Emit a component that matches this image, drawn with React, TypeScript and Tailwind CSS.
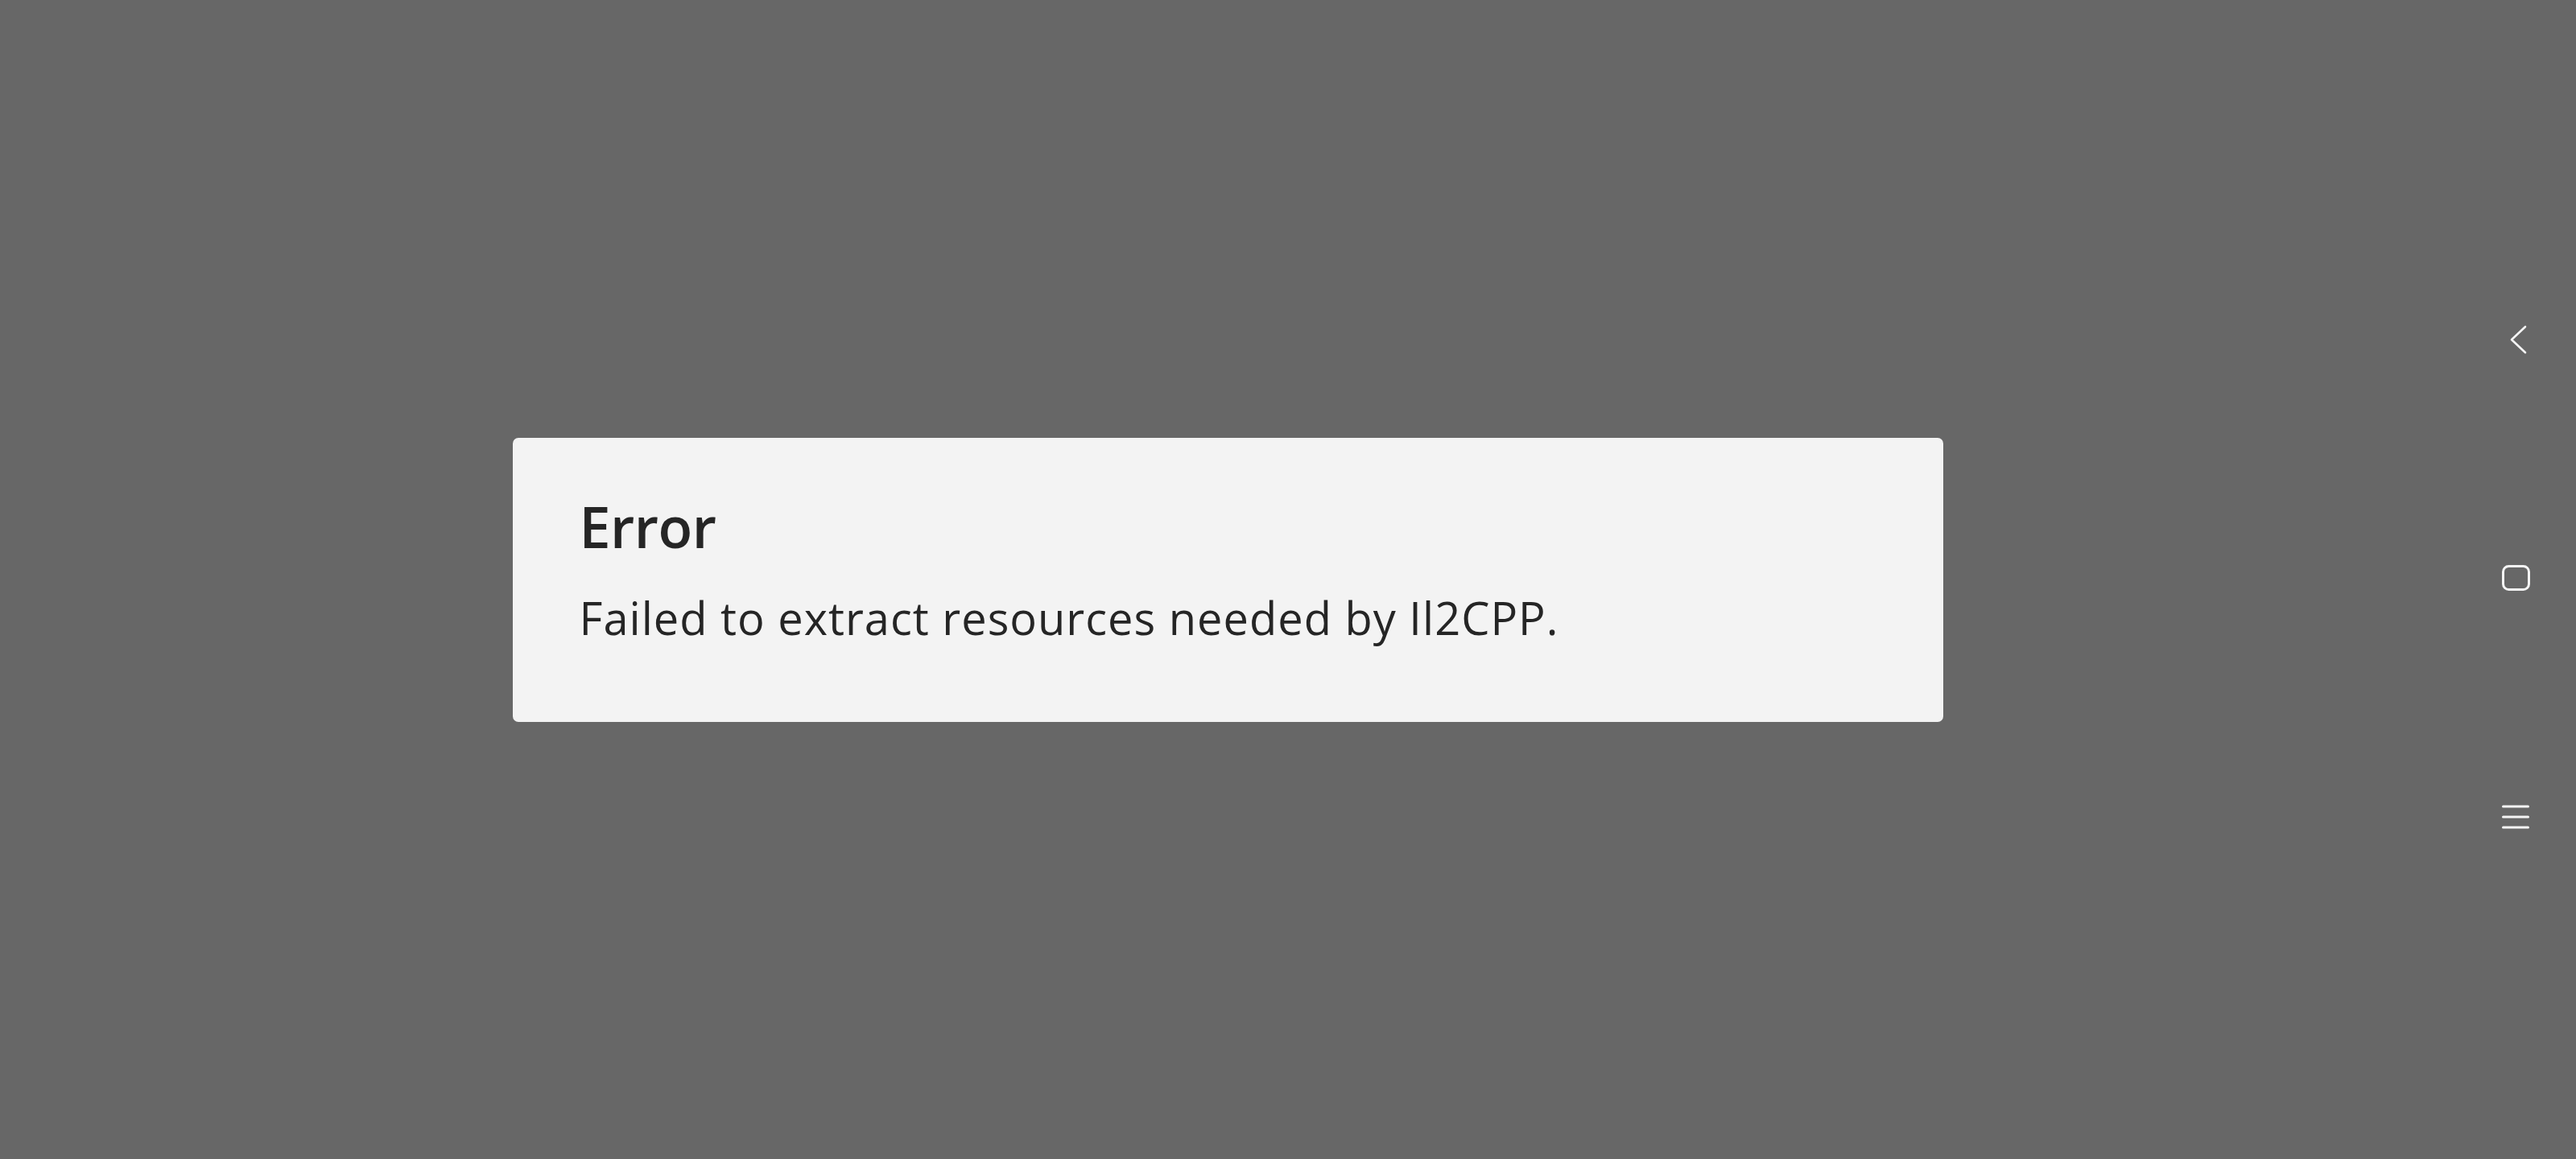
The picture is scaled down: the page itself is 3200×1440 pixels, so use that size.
import React from "react";

function BackIcon() {
  return (
    <svg width="40" height="40" viewBox="0 0 40 40" fill="none">
      <polyline points="32,5 15,21 32,37" stroke="#f5f5f5" strokeWidth="2.6" strokeLinecap="round" strokeLinejoin="round" />
    </svg>
  );
}

function HomeIcon() {
  return (
    <svg width="40" height="40" viewBox="0 0 40 40" fill="none">
      <rect x="4.5" y="5.5" width="32" height="29" rx="7" stroke="#f5f5f5" strokeWidth="3" />
    </svg>
  );
}

function MenuIcon() {
  return (
    <svg width="40" height="40" viewBox="0 0 40 40" fill="none">
      <line x1="4.5" y1="7" x2="35.5" y2="7" stroke="#f5f5f5" strokeWidth="3" strokeLinecap="round" />
      <line x1="4.5" y1="20" x2="35.5" y2="20" stroke="#f5f5f5" strokeWidth="3" strokeLinecap="round" />
      <line x1="4.5" y1="33" x2="35.5" y2="33" stroke="#f5f5f5" strokeWidth="3" strokeLinecap="round" />
    </svg>
  );
}

export default function App() {
  return (
    <div className="flex h-[1440px] w-[3200px] overflow-hidden bg-[#676767]" style={{ fontFamily: "'Open Sans', 'Noto Sans', sans-serif" }}>
      <main className="flex flex-1 items-center justify-center">
        <div className="w-[1777px] rounded-[7px] bg-[#f3f3f3] pl-[83px] pr-[83px] pt-[75px] pb-[102px]">
          <h1 className="text-[70px] font-semibold leading-none tracking-[-0.5px] text-[#252525]">Error</h1>
          <p className="mt-[50px] text-[56px] leading-none tracking-[1px] text-[#252525]">Failed to extract resources needed by Il2CPP.</p>
        </div>
      </main>
      <nav className="flex w-[150px] flex-col items-center pt-[401px] gap-[257px]">
        <div className="h-[40px] w-[40px]"><BackIcon /></div>
        <div className="h-[40px] w-[40px]"><HomeIcon /></div>
        <div className="h-[40px] w-[40px]"><MenuIcon /></div>
      </nav>
    </div>
  );
}
